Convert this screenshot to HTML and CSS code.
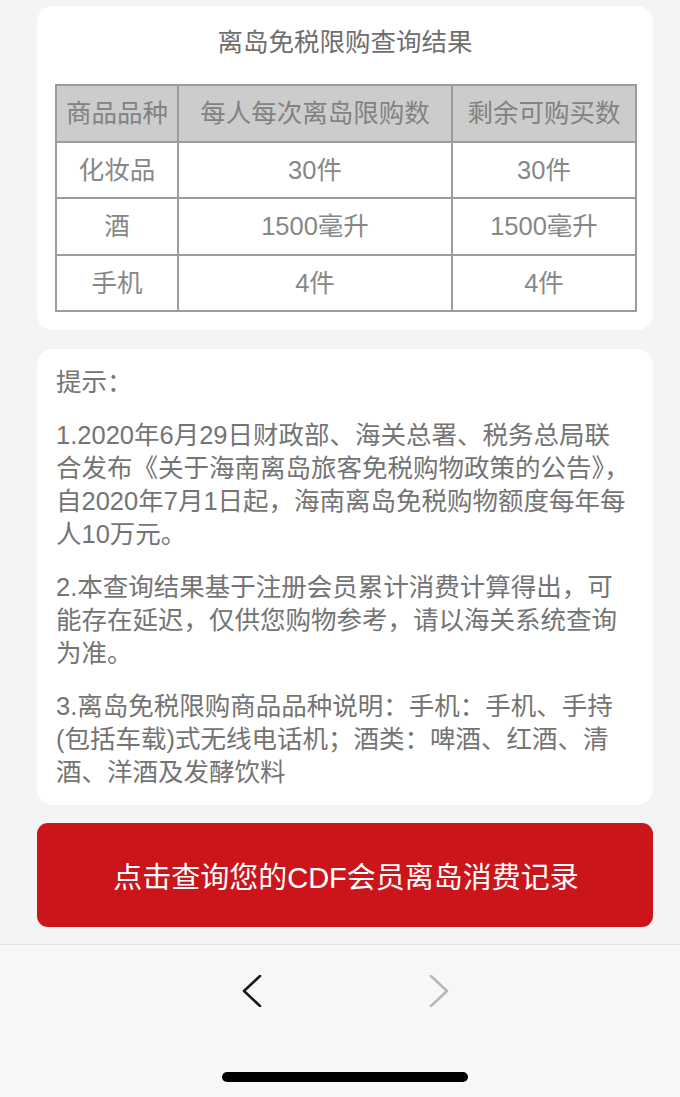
FILE: index.html
```html
<!DOCTYPE html>
<html lang="zh-CN">
<head>
<meta charset="utf-8">
<title>离岛免税限购查询结果</title>
<link rel="stylesheet" href="styles.css">
</head>
<body>
<div class="page">
  <main class="content">
    <section class="card result">
      <h1 class="title">离岛免税限购查询结果</h1>
      <table class="limits">
        <colgroup>
          <col class="c1"><col class="c2"><col class="c3">
        </colgroup>
        <thead>
          <tr><th>商品品种</th><th>每人每次离岛限购数</th><th>剩余可购买数</th></tr>
        </thead>
        <tbody>
          <tr><td>化妆品</td><td>30件</td><td>30件</td></tr>
          <tr><td>酒</td><td>1500毫升</td><td>1500毫升</td></tr>
          <tr><td>手机</td><td>4件</td><td>4件</td></tr>
        </tbody>
      </table>
    </section>

    <section class="card tips">
      <p class="tip">提示：</p>
      <p class="tip">1.2020年6月29日财政部、海关总署、税务总局联<br>合发布《关于海南离岛旅客免税购物政策的公告》，<br>自2020年7月1日起，海南离岛免税购物额度每年每<br>人10万元。</p>
      <p class="tip">2.本查询结果基于注册会员累计消费计算得出，可<br>能存在延迟，仅供您购物参考，请以海关系统查询<br>为准。</p>
      <p class="tip">3.离岛免税限购商品品种说明：手机：手机、手持<br>(包括车载)式无线电话机；酒类：啤酒、红酒、清<br>酒、洋酒及发酵饮料</p>
    </section>

    <a class="query-btn" href="#">点击查询您的CDF会员离岛消费记录</a>
  </main>

  <footer class="toolbar">
    <div class="nav">
      <span class="nav-btn back">
        <svg width="20" height="32" viewBox="0 0 20 32"><path d="M18 1 L2 16 L18 31" fill="none" stroke="#1a1a1a" stroke-width="2.6" stroke-linecap="round" stroke-linejoin="round"/></svg>
      </span>
      <span class="nav-btn fwd">
        <svg width="20" height="32" viewBox="0 0 20 32"><path d="M2 1 L18 16 L2 31" fill="none" stroke="#b8b8b8" stroke-width="2.6" stroke-linecap="round" stroke-linejoin="round"/></svg>
      </span>
    </div>
    <div class="home-indicator"></div>
  </footer>
</div>
</body>
</html>
```

FILE: styles.css
```css
* { box-sizing: border-box; }

html, body {
  margin: 0;
  padding: 0;
  background: #f4f4f4;
}

body {
  font-family: "Liberation Sans", "Noto Sans CJK SC", sans-serif;
  color: #737373;
}

.page {
  width: 680px;
  height: 1097px;
  display: flex;
  flex-direction: column;
}

.content {
  padding: 6px 0 0 37px;
  display: flex;
  flex-direction: column;
}

.card {
  width: 616px;
  background: #ffffff;
  border-radius: 16px;
}

.result {
  padding: 19px 18px 18px 18px;
}

.title {
  margin: 0;
  font-size: 25.5px;
  font-weight: normal;
  line-height: 34px;
  text-align: center;
  color: #6e6e6e;
}

.limits {
  margin-top: 25px;
  width: 580px;
  border-collapse: collapse;
  table-layout: fixed;
  font-size: 25.5px;
  color: #878787;
}

.limits col.c1 { width: 122px; }
.limits col.c2 { width: 274px; }
.limits col.c3 { width: 184px; }

.limits th,
.limits td {
  height: 56.5px;
  padding: 0;
  border: 2px solid #9c9c9c;
  text-align: center;
  vertical-align: middle;
  font-weight: normal;
  line-height: 30px;
}

.limits th {
  background: #cccccc;
  color: #828282;
}

.tips {
  margin-top: 19px;
  padding: 17px 18px 16px 19px;
}

.tip {
  margin: 0 0 20px 0;
  font-size: 25.5px;
  line-height: 33px;
  white-space: nowrap;
  color: #747474;
}

.tip:last-child { margin-bottom: 0; }

.query-btn {
  margin-top: 18px;
  width: 616px;
  height: 104px;
  border-radius: 11px;
  background: #cc151b;
  color: #ffffff;
  font-size: 29px;
  text-decoration: none;
  display: flex;
  align-items: center;
  justify-content: center;
  padding-left: 2px;
}

.toolbar {
  margin-top: 17px;
  flex: 1;
  background: #f7f7f7;
  border-top: 1px solid #e2e2e2;
  display: flex;
  flex-direction: column;
  align-items: center;
}

.nav {
  margin-top: 30px;
  width: 100%;
  display: flex;
  padding-left: 242px;
  gap: 167px;
}

.nav-btn {
  width: 20px;
  height: 32px;
  display: flex;
}

.home-indicator {
  margin-top: 65px;
  margin-left: 10px;
  width: 246px;
  height: 10px;
  border-radius: 5px;
  background: #000000;
}
```
